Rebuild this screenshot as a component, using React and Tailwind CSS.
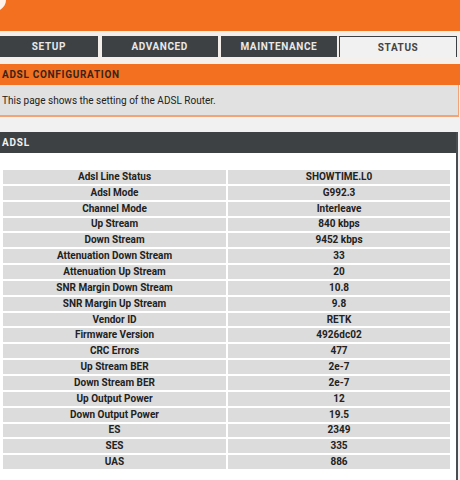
import React from "react";

const rows = [
  ["Adsl Line Status", "SHOWTIME.L0"],
  ["Adsl Mode", "G992.3"],
  ["Channel Mode", "Interleave"],
  ["Up Stream", "840 kbps"],
  ["Down Stream", "9452 kbps"],
  ["Attenuation Down Stream", "33"],
  ["Attenuation Up Stream", "20"],
  ["SNR Margin Down Stream", "10.8"],
  ["SNR Margin Up Stream", "9.8"],
  ["Vendor ID", "RETK"],
  ["Firmware Version", "4926dc02"],
  ["CRC Errors", "477"],
  ["Up Stream BER", "2e-7"],
  ["Down Stream BER", "2e-7"],
  ["Up Output Power", "12"],
  ["Down Output Power", "19.5"],
  ["ES", "2349"],
  ["SES", "335"],
  ["UAS", "886"],
];

function Tab({ label, active, className }) {
  return (
    <div
      className={
        "h-full flex items-center justify-center text-[10px] font-bold tracking-[0.6px] " +
        (active
          ? "bg-[#f1f1f1] text-[#444] border border-[#3d4043] border-b-0 "
          : "bg-[#3e4143] text-[#e9e9e9] ") +
        className
      }
    >
      {label}
    </div>
  );
}

export default function App() {
  return (
    <div className="w-[460px] h-[480px] overflow-hidden bg-[#f2f2f2] font-['Roboto',sans-serif]">
      <div className="h-[31px] bg-[#f37021] relative">
        <svg className="absolute left-0 top-0" width="9" height="11" viewBox="0 0 9 11">
          <path d="M0 0 H6 C6 4 4 7 0 10 Z" fill="#ffffff" opacity="0.9" />
        </svg>
      </div>
      <div className="h-[5px] bg-[#f4eeea]" />
      <div className="h-[21px] flex gap-[3px] bg-[#f4eeea]">
        <Tab label="SETUP" className="w-[98px]" />
        <Tab label="ADVANCED" className="w-[116px] ml-[1px]" />
        <Tab label="MAINTENANCE" className="w-[117px]" />
        <Tab label="STATUS" active className="w-[118px] -ml-[1px]" />
        <Tab label="" className="flex-1" />
      </div>
      <div className="h-[7px] bg-[#f6f0ec]" />
      <div className="h-[21px] bg-[#f37021] flex items-center pl-[2px] text-[10px] font-bold tracking-[0.7px] text-[#3a2418]">
        ADSL CONFIGURATION
      </div>
      <div className="w-[459px] h-[32px] bg-[#e1e1e1] border-r border-b-[2px] border-[#f1a577] flex items-center pl-[2px] text-[10px] text-[#222]">
        This page shows the setting of the ADSL Router.
      </div>
      <div className="h-[15px] bg-[#f1f1f1]" />
      <div className="w-[458px] h-[350px] bg-white border-r-[2px] border-b-[2px] border-[#4a4d4f]">
        <div className="h-[21px] bg-[#3e4143] flex items-center pl-[2px] text-[10px] font-bold tracking-[0.8px] text-[#f0f0f0]">
          ADSL
        </div>
        <div className="pt-[17px] pl-[3px] pr-[6px]">
          <div className="grid grid-cols-[223px_222px] gap-x-[2px] gap-y-[2px]">
            {rows.map(([k, v]) => (
              <React.Fragment key={k}>
                <div className="h-[13.85px] bg-[#dcdcdc] flex items-center justify-center text-[10px] font-bold text-[#222] leading-none">
                  {k}
                </div>
                <div className="h-[13.85px] bg-[#dcdcdc] flex items-center justify-center text-[10px] font-bold text-[#222] leading-none">
                  {v}
                </div>
              </React.Fragment>
            ))}
          </div>
        </div>
      </div>
    </div>
  );
}
